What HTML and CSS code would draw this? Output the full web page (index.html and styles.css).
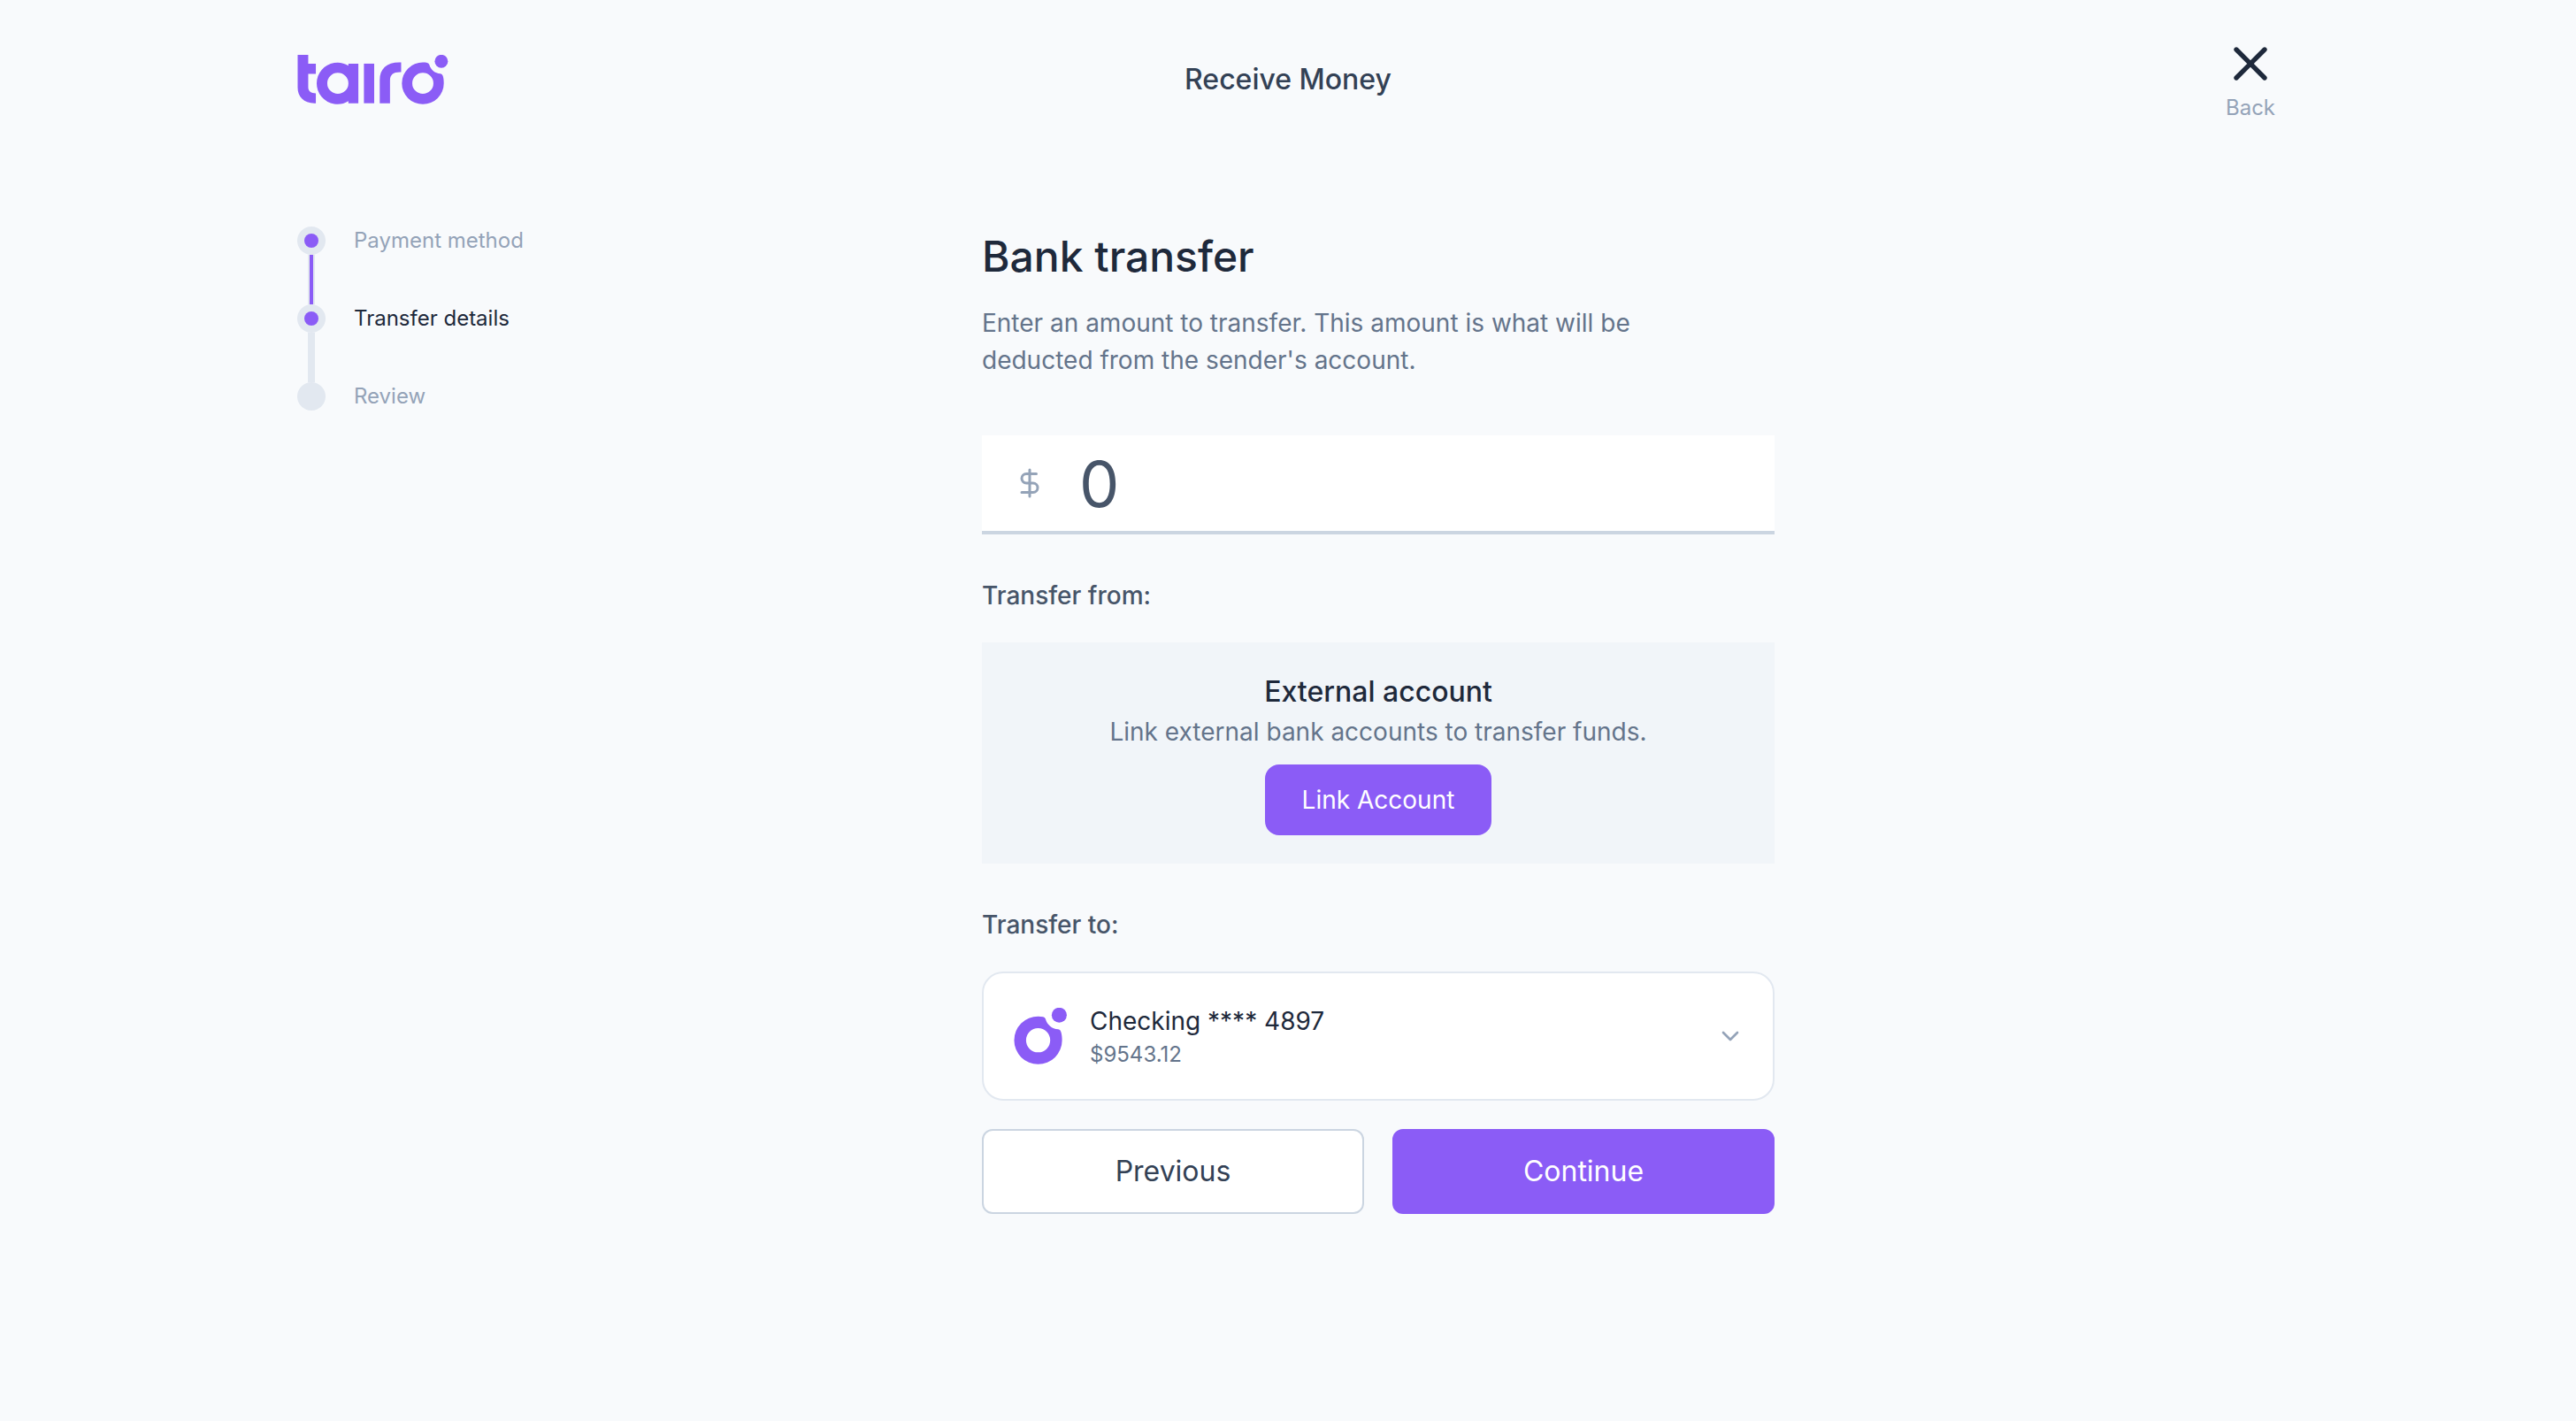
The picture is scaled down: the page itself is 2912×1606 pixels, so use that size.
FILE: index.html
```html
<!DOCTYPE html>
<html lang="en">
<head>
<meta charset="utf-8">
<meta name="viewport" content="width=device-width, initial-scale=1">
<title>Receive Money</title>
<link rel="stylesheet" href="styles.css">
</head>
<body>
<div class="page">
  <header class="topbar">
    <a class="brand" href="#" aria-label="Tairo">
      <svg class="brand-logo" viewBox="48 66 513 169" fill="currentColor" aria-hidden="true">
        <path d="M48 66H84V96H110V131H84V176C84 190 94 197 110 197V231C70 233 48 210 48 178Z"/>
        <path fill-rule="evenodd" d="M221 103V96H255V231H221V224A71 71 0 1 1 221 103ZM185 127A36 36 0 1 0 185 199A36 36 0 1 0 185 127Z"/>
        <path d="M274 96H309V231H274Z"/>
        <path d="M328 231V152C328 113 353 90 401 92V125C375 124 363 133 363 154V231Z"/>
        <g id="ring-mark">
          <path fill-rule="evenodd" d="M475 91.500C481 91.500 486 92 490 93Q495 94 497 99C502 117 516 129 535 130Q541 131 543 137C546 145 546.500 155 546.500 163A71.500 71.500 0 1 1 475 91.500ZM475 127A36 36 0 1 0 475 199A36 36 0 1 0 475 127Z"/>
          <circle cx="538" cy="88" r="22.500"/>
        </g>
      </svg>
    </a>
    <h1 class="topbar-title">Receive Money</h1>
    <a class="back" href="#">
      <svg class="back-icon" viewBox="0 0 24 24" fill="none" stroke="currentColor" stroke-width="2" stroke-linecap="round" stroke-linejoin="round" aria-hidden="true"><path d="M18 6 6 18M6 6l12 12"/></svg>
      <span>Back</span>
    </a>
  </header>

  <main class="content">
    <nav aria-label="Progress">
      <ol class="steps">
        <li class="step is-done"><span class="step-dot"></span><a href="#">Payment method</a></li>
        <li class="step is-current"><span class="step-dot"></span><a href="#" aria-current="step">Transfer details</a></li>
        <li class="step"><span class="step-dot"></span><a href="#">Review</a></li>
      </ol>
    </nav>

    <form class="transfer">
      <h2 class="transfer-title">Bank transfer</h2>
      <p class="transfer-intro">Enter an amount to transfer. This amount is what will be deducted from the sender's account.</p>

      <div class="amount">
        <svg class="amount-icon" viewBox="0 0 24 24" fill="none" stroke="currentColor" stroke-width="2" stroke-linecap="round" stroke-linejoin="round" aria-hidden="true"><path d="M12 2v20M17 5H9.500a3.500 3.500 0 0 0 0 7h5a3.500 3.500 0 0 1 0 7H6"/></svg>
        <input class="amount-input" type="text" inputmode="decimal" value="0" aria-label="Amount">
      </div>

      <h3 class="section-label">Transfer from:</h3>
      <section class="link-panel">
        <h4 class="link-title">External account</h4>
        <p class="link-text">Link external bank accounts to transfer funds.</p>
        <button class="button button-small button-primary" type="button">Link Account</button>
      </section>

      <h3 class="section-label" id="to-label">Transfer to:</h3>
      <button class="account" type="button" aria-haspopup="listbox" aria-describedby="to-label">
        <svg class="account-logo" viewBox="397 66 169 169" fill="currentColor" aria-hidden="true"><use href="#ring-mark"/></svg>
        <span class="account-text">
          <span class="account-name">Checking **** 4897</span>
          <span class="account-balance">$9543.12</span>
        </span>
        <svg class="account-chevron" viewBox="0 0 24 24" fill="none" stroke="currentColor" stroke-width="2" stroke-linecap="round" stroke-linejoin="round" aria-hidden="true"><path d="m6 9 6 6 6-6"/></svg>
      </button>

      <div class="actions">
        <button class="button" type="button">Previous</button>
        <button class="button button-primary" type="submit">Continue</button>
      </div>
    </form>
  </main>
</div>
</body>
</html>
```

FILE: styles.css
```css
:root {
  --violet: #8b5cf6;
  --slate-50: #f8fafc;
  --slate-100: #f1f5f9;
  --slate-200: #e2e8f0;
  --slate-300: #cbd5e1;
  --slate-400: #94a3b8;
  --slate-500: #64748b;
  --slate-600: #475569;
  --slate-700: #334155;
  --slate-800: #1e293b;
}

*,
*::before,
*::after {
  box-sizing: border-box;
}

body {
  margin: 0;
  min-height: 100vh;
  background: var(--slate-50);
  color: var(--slate-800);
  font-family: Inter, "Liberation Sans", sans-serif;
  font-size: 28px;
  line-height: 42px;
}

h1, h2, h3, h4, p, ol {
  margin: 0;
  padding: 0;
  font-size: inherit;
  font-weight: 400;
}

a {
  color: inherit;
  text-decoration: none;
}

button,
input {
  font: inherit;
}

button {
  cursor: pointer;
}

svg {
  display: block;
}

.page {
  max-width: 2304px;
  margin: 0 auto;
  padding: 40px 32px;
}

/* Top bar */

.topbar {
  display: grid;
  grid-template-columns: 1fr auto 1fr;
  align-items: center;
}

.brand {
  justify-self: start;
  color: var(--violet);
}

.brand-logo {
  width: 171px;
  height: 56px;
}

.topbar-title {
  color: var(--slate-700);
  font-size: 32px;
  font-weight: 500;
  line-height: 48px;
}

.back {
  display: flex;
  flex-direction: column;
  align-items: center;
  justify-self: end;
  color: var(--slate-400);
  font-size: 24px;
  line-height: 36px;
}

.back-icon {
  width: 64px;
  height: 64px;
  color: var(--slate-800);
}

/* Two columns: progress and form */

.content {
  display: grid;
  grid-template-columns: minmax(288px, 774px) minmax(0, 896px);
  padding-top: 116px;
}

.steps {
  display: flex;
  flex-direction: column;
  gap: 56px;
  list-style: none;
}

.step {
  position: relative;
  display: flex;
  align-items: center;
  gap: 32px;
  height: 32px;
  color: var(--slate-400);
  font-size: 24px;
}

.step-dot {
  display: flex;
  align-items: center;
  justify-content: center;
  width: 32px;
  height: 32px;
  border-radius: 50%;
  background: var(--slate-200);
}

.is-done .step-dot::before,
.is-current .step-dot::before {
  content: "";
  width: 16px;
  height: 16px;
  border-radius: 50%;
  background: var(--violet);
}

.step:not(:last-child)::after {
  content: "";
  position: absolute;
  top: 100%;
  left: 12px;
  width: 8px;
  height: 56px;
  background: var(--slate-200);
}

.step.is-done::after {
  border: solid var(--slate-200);
  border-width: 0 2px;
  background: var(--violet);
}

.is-current {
  color: var(--slate-800);
}

/* Form */

.transfer-title {
  margin-bottom: 20px;
  font-size: 48px;
  font-weight: 500;
  line-height: 68px;
}

.transfer-intro {
  max-width: 768px;
  margin-bottom: 64px;
  color: var(--slate-500);
}

.amount {
  display: flex;
  align-items: center;
  gap: 38px;
  padding-left: 36px;
  border-bottom: 4px solid var(--slate-300);
  background: #fff;
}

.amount-icon {
  flex: none;
  width: 36px;
  height: 36px;
  color: var(--slate-400);
}

.amount-input {
  flex: 1;
  min-width: 0;
  height: 108px;
  padding: 0;
  border: 0;
  outline: 0;
  background: none;
  color: var(--slate-600);
  font-size: 72px;
}

.section-label {
  margin: 48px 0 32px;
  color: var(--slate-600);
  font-weight: 500;
}

.link-panel {
  display: flex;
  flex-direction: column;
  align-items: center;
  padding: 32px;
  background: var(--slate-100);
  text-align: center;
}

.link-title {
  font-size: 32px;
  font-weight: 500;
  line-height: 48px;
}

.link-text {
  margin-bottom: 16px;
  color: var(--slate-500);
}

.account {
  display: flex;
  align-items: center;
  gap: 24px;
  width: 100%;
  padding: 33px 32px;
  border: 2px solid var(--slate-200);
  border-radius: 24px;
  background: #fff;
  color: var(--slate-800);
  text-align: left;
}

.account-logo {
  flex: none;
  width: 64px;
  height: 64px;
  color: var(--violet);
}

.account-text {
  display: flex;
  flex: 1;
  flex-direction: column;
}

.account-balance {
  color: var(--slate-500);
  font-size: 24px;
  line-height: 34px;
}

.account-chevron {
  flex: none;
  width: 32px;
  height: 32px;
  color: var(--slate-400);
}

.actions {
  display: grid;
  grid-template-columns: 1fr 1fr;
  gap: 32px;
  margin-top: 32px;
}

.button {
  height: 96px;
  padding: 0 40px;
  border: 2px solid var(--slate-300);
  border-radius: 12px;
  background: #fff;
  color: var(--slate-700);
  font-size: 32px;
}

.button-primary {
  border-color: var(--violet);
  background: var(--violet);
  color: #fff;
}

.button-small {
  height: 80px;
  border-radius: 16px;
  font-size: 28px;
}
```
